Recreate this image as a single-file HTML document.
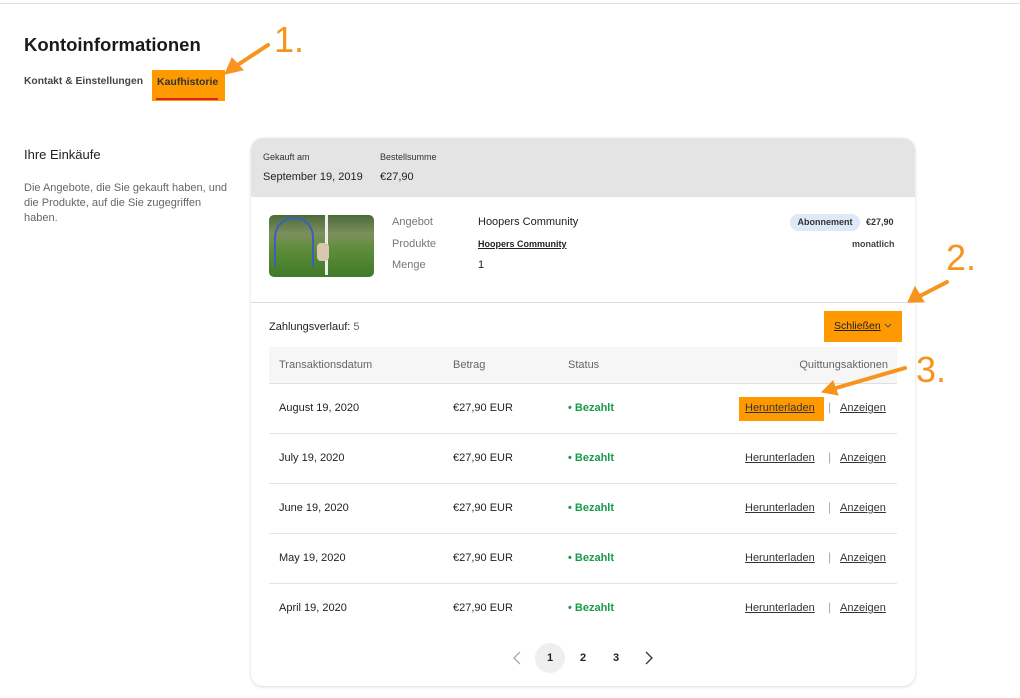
<!DOCTYPE html>
<html><head><meta charset="utf-8"><style>
*{margin:0;padding:0;box-sizing:border-box}
body{width:1020px;height:698px;background:#fff;font-family:"Liberation Sans",sans-serif;color:#222;position:relative;overflow:hidden}
.a{position:absolute;white-space:nowrap}
.u{text-decoration:underline}
.row{position:absolute;left:269px;width:628px;height:50px;border-bottom:1px solid #e4e4e4;font-size:11px}
.row span{position:absolute;top:18px}
.g{color:#1a9a4a;font-weight:bold}
.o{background:#ff9900}
</style></head><body>
<div class="a" style="left:0;top:3px;width:1020px;height:1px;background:#ddd"></div>
<div class="a" style="left:24px;top:34px;font-size:18.5px;font-weight:bold;color:#1a1a1a">Kontoinformationen</div>
<div class="a" style="left:24px;top:76px;font-size:10.3px;font-weight:bold;color:#444">Kontakt &amp; Einstellungen</div>
<div class="a o" style="left:152px;top:70px;width:73px;height:31px"></div>
<div class="a" style="left:157px;top:76px;font-size:10.5px;font-weight:bold;color:#333">Kaufhistorie</div>
<div class="a" style="left:156px;top:98px;width:62px;height:2px;background:#e02020"></div>
<div class="a" style="left:24px;top:147px;font-size:13px;color:#222">Ihre Einkäufe</div>
<div class="a" style="left:24px;top:181px;font-size:11px;line-height:15px;color:#666;white-space:normal;width:212px">Die Angebote, die Sie gekauft haben, und die Produkte, auf die Sie zugegriffen haben.</div>

<div class="a" style="left:251px;top:138px;width:664px;height:548px;border-radius:12px;background:#fff;box-shadow:0 1px 3px rgba(0,0,0,.15);overflow:hidden">
 <div style="height:59px;background:#e4e4e4"></div>
 <div style="position:absolute;left:0;top:164px;width:664px;height:1px;background:#ddd"></div>
</div>
<div class="a" style="left:263px;top:152px;font-size:9px;color:#333">Gekauft am</div>
<div class="a" style="left:380px;top:152px;font-size:9px;color:#333">Bestellsumme</div>
<div class="a" style="left:263px;top:171px;font-size:11px;color:#222">September 19, 2019</div>
<div class="a" style="left:380px;top:171px;font-size:11px;color:#222">€27,90</div>
<div class="a" style="left:269px;top:215px;width:105px;height:62px;border-radius:5px;background:linear-gradient(180deg,#4a6a3a 0%,#7d8f5e 30%,#5f8d3a 55%,#3f7a28 100%);overflow:hidden">
 <div style="position:absolute;left:5px;top:2px;width:40px;height:50px;border:2px solid #3a5fc0;border-bottom:none;border-radius:20px 20px 0 0"></div>
 <div style="position:absolute;left:56px;top:0;width:3px;height:60px;background:#eee"></div>
 <div style="position:absolute;left:48px;top:28px;width:12px;height:18px;background:#d8c8b0;border-radius:4px"></div>
</div>
<div class="a" style="left:392px;top:216px;font-size:11px;color:#777">Angebot</div>
<div class="a" style="left:392px;top:238px;font-size:11px;color:#777">Produkte</div>
<div class="a" style="left:392px;top:259px;font-size:11px;color:#777">Menge</div>
<div class="a" style="left:478px;top:216px;font-size:11px;color:#222">Hoopers Community</div>
<div class="a u" style="left:478px;top:239px;font-size:9px;font-weight:bold;color:#222">Hoopers Community</div>
<div class="a" style="left:478px;top:259px;font-size:11px;color:#222">1</div>
<div class="a" style="left:790px;top:214px;width:70px;height:17px;border-radius:9px;background:#dde8f8;font-size:9px;font-weight:bold;text-align:center;line-height:17px;color:#333">Abonnement</div>
<div class="a" style="left:866px;top:217px;font-size:9px;font-weight:bold;color:#333">€27,90</div>
<div class="a" style="left:852px;top:239px;font-size:9px;font-weight:bold;color:#444">monatlich</div>

<div class="a" style="left:269px;top:321px;font-size:11px;color:#222">Zahlungsverlauf: <span style="color:#666">5</span></div>
<div class="a o" style="left:824px;top:311px;width:78px;height:31px"></div>
<div class="a u" style="left:834px;top:320px;font-size:10.5px;color:#222">Schließen</div>
<svg class="a" style="left:884px;top:323px" width="8" height="6"><path d="M1 1 L4 4 L7 1" fill="none" stroke="#555" stroke-width="1.1"/></svg>

<div class="a" style="left:269px;top:347px;width:628px;height:37px;background:#f6f6f6;border-bottom:1px solid #e0e0e0;font-size:11px;color:#666">
 <span class="a" style="left:10px;top:12px">Transaktionsdatum</span>
 <span class="a" style="left:184px;top:12px">Betrag</span>
 <span class="a" style="left:299px;top:12px">Status</span>
 <span class="a" style="right:9px;top:12px">Quittungsaktionen</span>
</div>

<div class="row" style="top:384px"><span style="left:10px">August 19, 2020</span><span style="left:184px">€27,90 EUR</span><span class="g" style="left:299px">• Bezahlt</span></div>
<div class="row" style="top:434px"><span style="left:10px">July 19, 2020</span><span style="left:184px">€27,90 EUR</span><span class="g" style="left:299px">• Bezahlt</span></div>
<div class="row" style="top:484px"><span style="left:10px">June 19, 2020</span><span style="left:184px">€27,90 EUR</span><span class="g" style="left:299px">• Bezahlt</span></div>
<div class="row" style="top:534px"><span style="left:10px">May 19, 2020</span><span style="left:184px">€27,90 EUR</span><span class="g" style="left:299px">• Bezahlt</span></div>
<div class="row" style="top:584px;border-bottom:none"><span style="left:10px">April 19, 2020</span><span style="left:184px">€27,90 EUR</span><span class="g" style="left:299px">• Bezahlt</span></div>

<div class="a o" style="left:739px;top:397px;width:85px;height:24px"></div>
<div class="a u" style="left:745px;top:402px;font-size:11px;color:#333">Herunterladen</div>
<div class="a u" style="left:745px;top:452px;font-size:11px;color:#333">Herunterladen</div>
<div class="a u" style="left:745px;top:502px;font-size:11px;color:#333">Herunterladen</div>
<div class="a u" style="left:745px;top:552px;font-size:11px;color:#333">Herunterladen</div>
<div class="a u" style="left:745px;top:602px;font-size:11px;color:#333">Herunterladen</div>
<div class="a" style="left:828px;top:400px;font-size:12px;color:#aaa">|</div>
<div class="a" style="left:828px;top:450px;font-size:12px;color:#aaa">|</div>
<div class="a" style="left:828px;top:500px;font-size:12px;color:#aaa">|</div>
<div class="a" style="left:828px;top:550px;font-size:12px;color:#aaa">|</div>
<div class="a" style="left:828px;top:600px;font-size:12px;color:#aaa">|</div>
<div class="a u" style="left:840px;top:402px;font-size:11px;color:#333">Anzeigen</div>
<div class="a u" style="left:840px;top:452px;font-size:11px;color:#333">Anzeigen</div>
<div class="a u" style="left:840px;top:502px;font-size:11px;color:#333">Anzeigen</div>
<div class="a u" style="left:840px;top:552px;font-size:11px;color:#333">Anzeigen</div>
<div class="a u" style="left:840px;top:602px;font-size:11px;color:#333">Anzeigen</div>

<div class="a" style="left:535px;top:643px;width:30px;height:30px;border-radius:15px;background:#efefef"></div>
<div class="a" style="left:547px;top:652px;font-size:11px;font-weight:bold">1</div>
<div class="a" style="left:580px;top:652px;font-size:11px;font-weight:bold">2</div>
<div class="a" style="left:613px;top:652px;font-size:11px;font-weight:bold">3</div>
<svg class="a" style="left:0;top:0" width="1020" height="698">
 <path d="M520 652 L514 658 L520 664" fill="none" stroke="#aaa" stroke-width="1.3"/>
 <path d="M646 652 L652 658 L646 664" fill="none" stroke="#333" stroke-width="1.3"/>
 <g stroke="#f7941d" stroke-width="4" fill="#f7941d" stroke-linecap="round">
  <line x1="268" y1="45" x2="236" y2="66"/><polygon points="225,74 232,58 243,70" stroke-width="1"/>
  <line x1="947" y1="282" x2="920" y2="296"/><polygon points="908,302 915,287 924,302" stroke-width="1"/>
  <line x1="905" y1="368" x2="836" y2="388"/><polygon points="822,392 833,381 838,395" stroke-width="1"/>
 </g>
 <text x="274" y="52" font-family="Liberation Sans" font-size="36" fill="#f7941d">1.</text>
 <text x="946" y="270" font-family="Liberation Sans" font-size="36" fill="#f7941d">2.</text>
 <text x="916" y="382" font-family="Liberation Sans" font-size="36" fill="#f7941d">3.</text>
</svg>
</body></html>
